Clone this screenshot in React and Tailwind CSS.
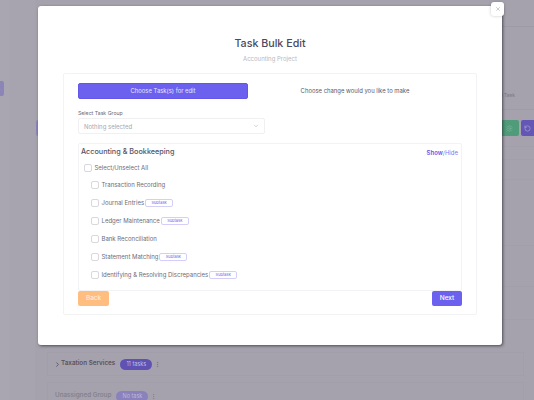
import React from "react";
import { ChevronDown, ChevronRight, EllipsisVertical, X, Settings, RotateCcw } from "lucide-react";

const F = { fontFamily: '"Inter", "Noto Sans", sans-serif' };

function Box() {
  return <span className="w-[7.5px] h-[7.5px] shrink-0 rounded-[2px] border border-[#d8d8dd] bg-white" />;
}

function Sub() {
  return (
    <span className="-ml-[2px] w-[28px] h-[8px] flex items-center justify-center rounded-[2px] border border-[#d4cefb] text-[4px] leading-none text-[#6d5ff0]">
      Subtask
    </span>
  );
}

const rows = [
  ["Transaction Recording", false],
  ["Journal Entries", true],
  ["Ledger Maintenance", true],
  ["Bank Reconciliation", false],
  ["Statement Matching", true],
  ["Identifying & Resolving Discrepancies", true],
];

export default function App() {
  return (
    <div style={F} className="relative w-[534px] h-[400px] overflow-hidden bg-[#a5a2ad]">
      {/* dimmed page behind the modal */}
      <div className="flex h-full">
        <aside className="w-[10px] shrink-0 bg-[#a9a6b1] pt-[81px]">
          <div className="w-[4px] h-[15px] rounded-r-[2px] bg-[#8c85b8]" />
        </aside>
        <div className="w-[25px] shrink-0 bg-[#a7a4af]" />
        <main className="flex-1 min-w-0 flex flex-col pl-[12px]">
          <div className="h-[27px] shrink-0 border-b border-[#9e9ba7]" />
          <div className="h-[45px] shrink-0" />
          <div className="h-[38px] shrink-0 border-b border-[#aa9a94] flex justify-end items-center pr-[19px] text-[5px] text-[#77747f]">
            <span className="mt-[10px]">d Task</span>
          </div>
          <div className="h-[37px] shrink-0 flex items-center gap-[2px] border-b border-[#a29fab]">
            <span className="-ml-[11px] w-[4px] h-[16px] rounded-[2px] bg-[#8c85b8] mr-auto" />
            <span className="w-[19px] h-[16px] rounded-[2px] bg-[#4f9b7a] flex items-center justify-center text-[#78b79a]">
              <Settings size={7} />
            </span>
            <span className="w-[13px] h-[16px] rounded-l-[2px] bg-[#6356b5] flex items-center justify-center text-[#b4aee0]">
              <RotateCcw size={7} />
            </span>
          </div>
          <div className="h-[13px] shrink-0 border-b border-[#a29fab]" />
          <div className="h-[20px] shrink-0 border-b border-[#a29fab]" />
          <div className="h-[66px] shrink-0 border-b border-[#a29fab]" />
          <div className="h-[41px] shrink-0 border-b border-[#a29fab]" />
          <div className="h-[33px] shrink-0 border-b border-[#a29fab]" />
          <div className="mt-[32px] h-[24px] shrink-0 mr-[10px] flex items-center border border-[#a29fab] text-[6.3px] font-semibold text-[#56535f] pl-[7px]">
            <ChevronRight size={7} strokeWidth={3} className="-ml-[1px]" />
            <span>Taxation Services</span>
            <span className="ml-[5px] h-[11px] w-[32px] rounded-full bg-[#5f52b3] flex items-center justify-center text-[5.5px] font-normal text-[#c3bfe0]">
              11 tasks
            </span>
            <EllipsisVertical size={7} className="ml-[2px] text-[#777480]" />
          </div>
          <div className="mt-[6px] h-[28px] shrink-0 mr-[10px] flex items-center border border-[#a29fab] pl-[7px] text-[6.3px] font-semibold text-[#85828e]">
            <span>Unassigned Group</span>
            <span className="ml-[5px] h-[11px] w-[32px] rounded-full bg-[#8a82bd] flex items-center justify-center text-[5.5px] font-normal text-[#bdb9d8]">
              No task
            </span>
            <EllipsisVertical size={7} className="ml-[2px] text-[#85828e]" />
          </div>
        </main>
      </div>

      {/* modal */}
      <div className="absolute left-[38px] top-[6px] w-[464px] h-[339px] rounded-[3px] bg-white shadow-[1px_1px_3px_rgba(40,38,50,0.7)] flex flex-col items-center pt-[31px]">
        <button className="absolute -right-[2px] -top-[4px] w-[13px] h-[14px] rounded-[3px] bg-white shadow-[0_0_3px_rgba(60,60,70,0.3)] flex items-center justify-center text-[#9a99a3]">
          <X size={6} />
        </button>
        <h1 className="text-[10.7px] leading-[14px] font-medium text-[#4b4860]">Task Bulk Edit</h1>
        <p className="mt-[4px] text-[6px] leading-[8px] text-[#b9b8c0]">Accounting Project</p>

        <section className="mt-[10px] w-[414px] h-[242px] shrink-0 rounded-[2px] border border-[#f3f3f5] px-[14px] pt-[9px] flex flex-col">
          <div className="flex items-center">
            <button className="w-[170px] h-[16px] rounded-[2px] bg-[#6c61ee] border border-[#6257e8] text-[5.9px] text-[#e6e3fd]">
              Choose Task(s) for edit
            </button>
            <span className="flex-1 text-center text-[5.9px] text-[#5b5968]">Choose change would you like to make</span>
          </div>

          <label className="mt-[11px] text-[5.2px] leading-[7px] text-[#6b6977]">Select Task Group</label>
          <div className="mt-[1px] w-[187px] h-[16px] rounded-[2px] border border-[#f0f0f3] flex items-center justify-between px-[5px] text-[6px] text-[#a7a6b0]">
            <span>Nothing selected</span>
            <ChevronDown size={6} className="text-[#a7a6b0]" />
          </div>

          <div className="mt-[9px] h-[148px] shrink-0 rounded-[2px] border border-[#f3f3f5] px-[2px] pt-[3px]">
            <div className="flex items-center justify-between h-[10px] pr-[1px]">
              <span className="text-[7.25px] font-medium text-[#545163]">Accounting & Bookkeeping</span>
              <span className="text-[6px] font-semibold text-[#6558e8]">
                Show<span className="font-normal text-[#8378ef]">/Hide</span>
              </span>
            </div>
            <div className="mt-[5px] ml-[3px] h-[12px] flex items-center gap-[3px] text-[6px] leading-none text-[#6e6c7a]">
              <Box />
              <span>Select/Unselect All</span>
            </div>
            <div className="mt-[5px] flex flex-col gap-[6px] pl-[10px]">
              {rows.map(([t, s]) => (
                <div key={t} className="h-[12px] flex items-center gap-[3px] text-[6px] leading-none text-[#6e6c7a]">
                  <Box />
                  <span>{t}</span>
                  {s && <Sub />}
                </div>
              ))}
            </div>
          </div>

          <div className="flex justify-between">
            <button className="w-[31px] h-[15px] rounded-[2px] bg-[#ffbd80] text-[6.5px] text-[#fff1e3]">Back</button>
            <button className="w-[30px] h-[15px] rounded-[2px] bg-[#6c61ee] text-[6.5px] font-medium text-white">Next</button>
          </div>
        </section>
      </div>
    </div>
  );
}
